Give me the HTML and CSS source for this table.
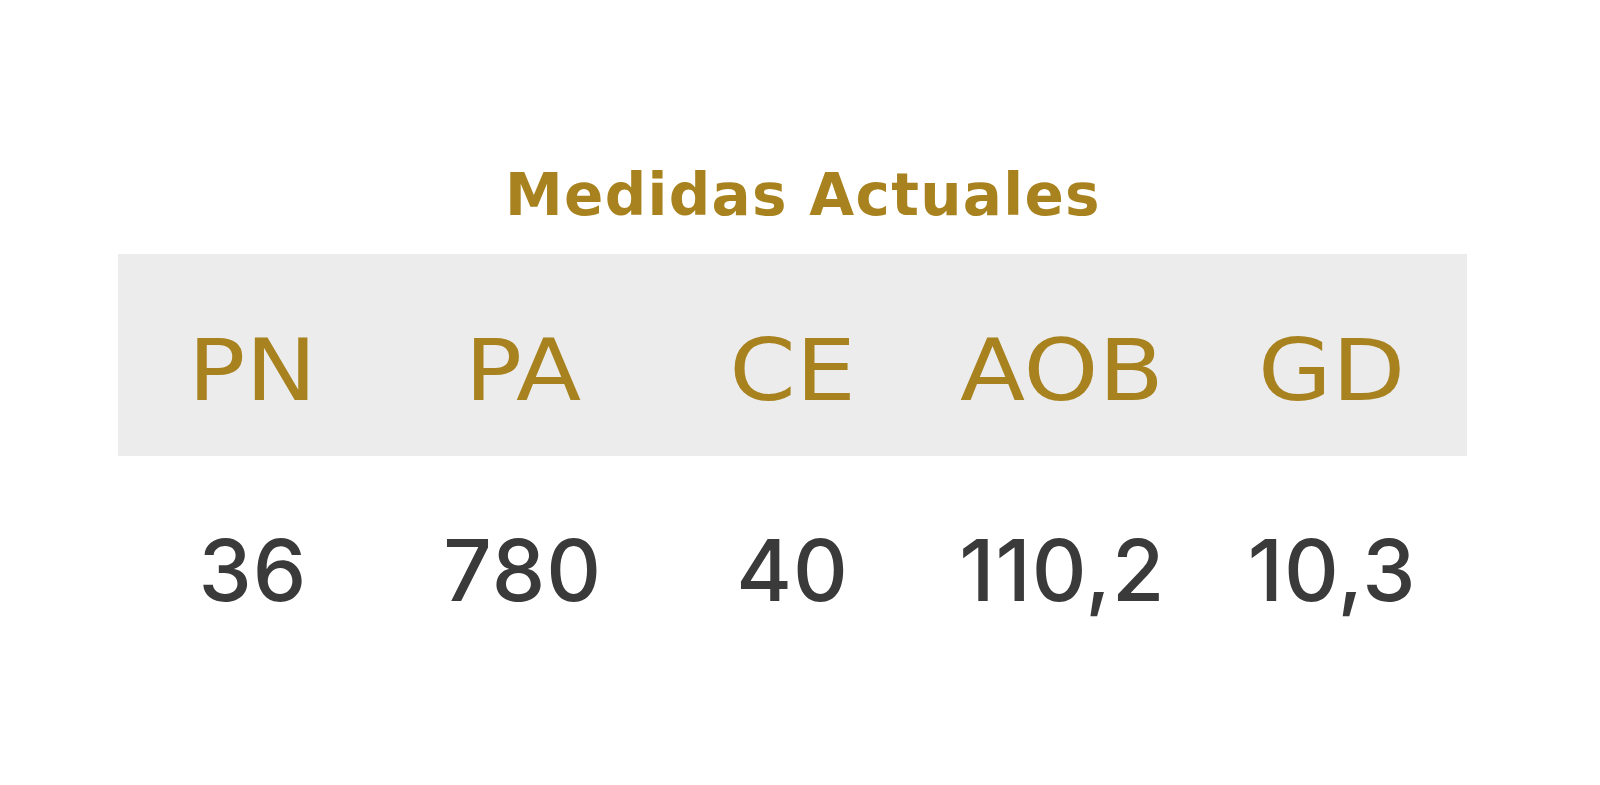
FILE: index.html
```html
<!DOCTYPE html>
<html lang="es">
<head>
<meta charset="utf-8">
<title>Medidas Actuales</title>
<link rel="stylesheet" href="styles.css">
</head>
<body>
<main class="page">
  <h1 class="title">Medidas Actuales</h1>
  <section class="table">
    <div class="row head">
      <div class="cell"><span class="label">PN</span></div>
      <div class="cell"><span class="label">PA</span></div>
      <div class="cell"><span class="label">CE</span></div>
      <div class="cell"><span class="label">AOB</span></div>
      <div class="cell"><span class="label">GD</span></div>
    </div>
    <div class="row values">
      <div class="cell">36</div>
      <div class="cell">780</div>
      <div class="cell">40</div>
      <div class="cell">110,2</div>
      <div class="cell">10,3</div>
    </div>
  </section>
</main>
</body>
</html>
```

FILE: styles.css
```css
html, body {
  margin: 0;
  padding: 0;
  background: #ffffff;
}
.page {
  width: 1600px;
  height: 785px;
  overflow: hidden;
  padding-top: 166px;
  box-sizing: border-box;
  font-family: "DejaVu Sans", sans-serif;
}
.title {
  margin: 0 0 30px 0;
  text-align: center;
  font-size: 58px;
  line-height: 58px;
  font-weight: 700;
  letter-spacing: 1.3px;
  color: #a8821e;
  padding-left: 6px;
}
.table {
  width: 1349px;
  margin-left: 118px;
}
.row {
  display: grid;
  grid-template-columns: repeat(5, 1fr);
  text-align: center;
  font-size: 85px;
  line-height: 85px;
}
.head {
  background: #ececec;
  color: #a8821e;
  padding: 74px 0 43px 0;
}
.label {
  display: inline-block;
  transform: scaleX(1.12);
}
.values {
  color: #3a3a3a;
  margin-top: 72px;
  font-family: "Inter", "DejaVu Sans", sans-serif;
  font-weight: 500;
  letter-spacing: 1px;
  font-feature-settings: "pnum" 1;
  font-variant-numeric: proportional-nums;
}
```
